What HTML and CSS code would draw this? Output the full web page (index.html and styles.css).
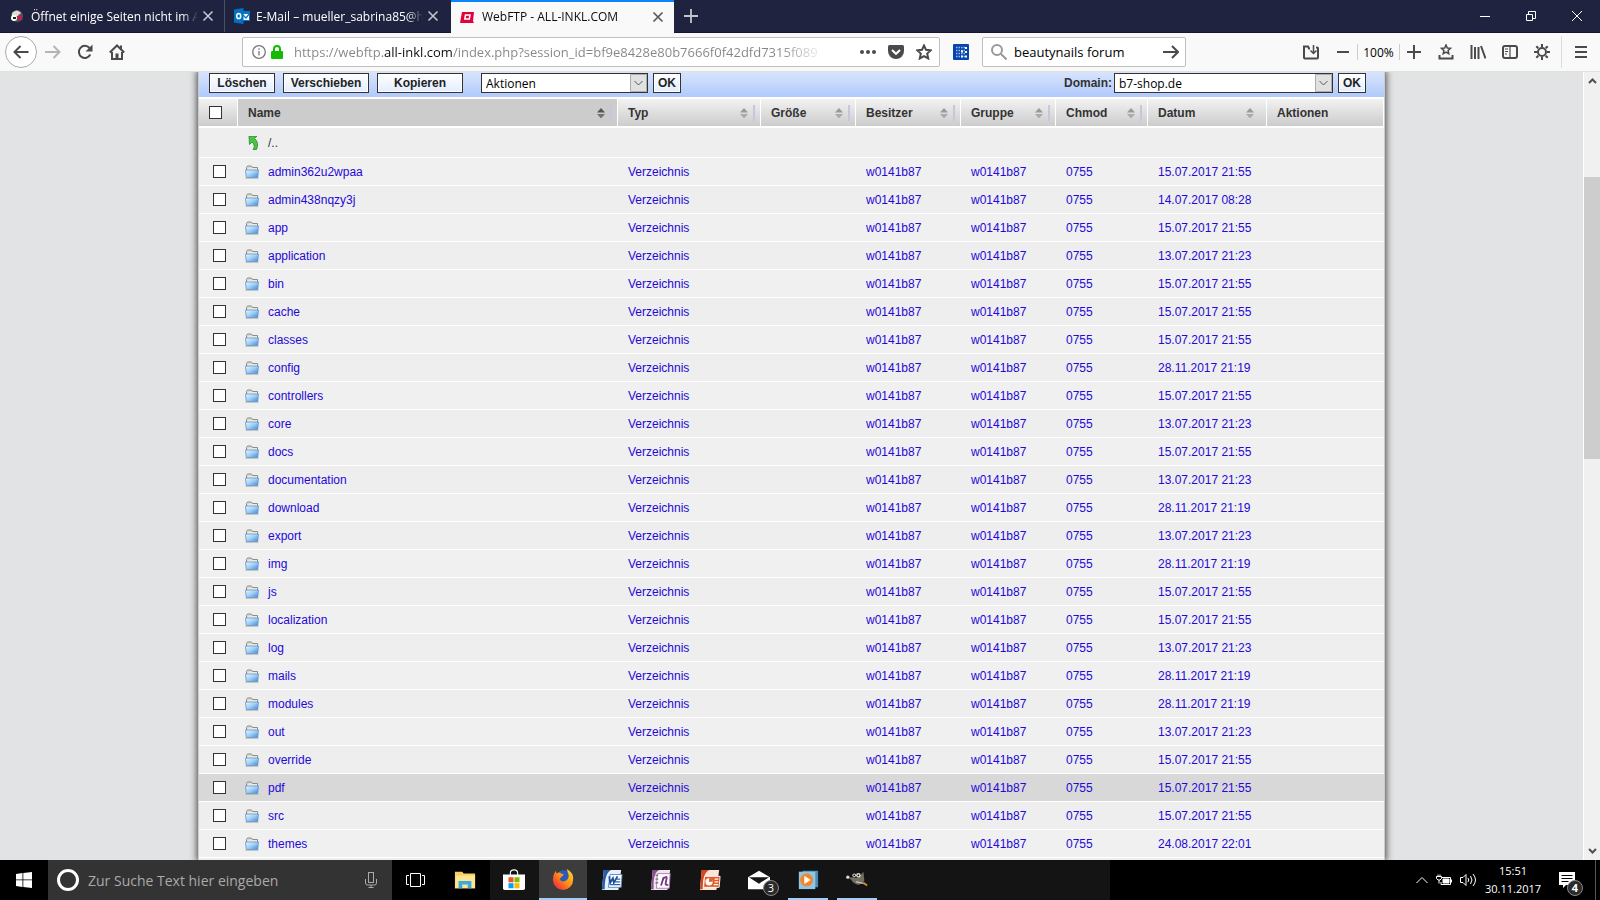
FILE: index.html
```
<!DOCTYPE html>
<html lang="de">
<head>
    <meta charset="UTF-8">
    <meta name="viewport" content="width=device-width, initial-scale=1.0">
    <title>WebFTP - ALL-INKL.COM</title>
    <link rel="stylesheet" href="styles.css">
</head>
<body>
    <!-- Shared icons -->
    <svg class="defs" width="0" height="0">
        <defs>
            <linearGradient id="blue" x1="0" y1="0" x2="1" y2="1">
                <stop offset="0" stop-color="#eef8ff"/>
                <stop offset=".5" stop-color="#9fcdf6"/>
                <stop offset="1" stop-color="#3f86d8"/>
            </linearGradient>
            <linearGradient id="flame" x1="1" y1="0" x2="0" y2="1">
                <stop offset="0" stop-color="#ffe226"/>
                <stop offset=".5" stop-color="#ff8a16"/>
                <stop offset="1" stop-color="#e8104f"/>
            </linearGradient>
            <symbol id="folder" viewBox="0 0 14 14">
                <path d="M1.5 6V2.500l1-1.500h4l1 1.500h5V6z" fill="#dcdcd6" stroke="#8c8c88"/>
                <path d="M3 4h9" stroke="#f6f6f4"/>
                <path d="M.5 5h13l-.8 7.500H1.300z" fill="url(#blue)" stroke="#5a94c8" stroke-width=".8"/>
                <path d="M.5 13.300h13" stroke="#aaa" stroke-width=".8"/>
            </symbol>
            <symbol id="sort" viewBox="0 0 8 10">
                <path class="up" d="M0 4.500L4 0l4 4.500z"/>
                <path class="down" d="M0 6h8l-4 4.500z" fill-opacity=".75"/>
            </symbol>
            <symbol id="close" viewBox="0 0 12 12">
                <path d="M1.500 1.500l9 9M10.500 1.500l-9 9" fill="none" stroke="currentColor" stroke-width="1.6"/>
            </symbol>
        </defs>
    </svg>

    <!-- Tabs -->
    <header class="titlebar">
        <div class="tab">
            <svg class="favicon" viewBox="0 0 16 16"><circle cx="8" cy="8" r="6" fill="#555"/><path d="M3 5q5-5 9 0l-3 3-6 1z" fill="#ddd"/><circle cx="5" cy="10" r="3" fill="#fff"/><path d="M4 10h3" stroke="#222" stroke-width="2"/><path d="M10 6l4 6-6-1z" fill="#e0104c"/></svg>
            <span class="tab-title">Öffnet einige Seiten nicht im Ac</span>
            <button class="tab-close" aria-label="Tab schließen"><svg><use href="#close"/></svg></button>
        </div>
        <div class="tab">
            <svg class="favicon" viewBox="0 0 16 16"><path d="M8 3h8v10H8z" fill="#0a72c8"/><path d="M9 6h6v6H9z" fill="#fff"/><path d="M9 7l3 3 4-5" fill="none" stroke="#0a72c8" stroke-width="1.300"/><path d="M0 1.500L9.500 0v16L0 14.500z" fill="#0072c6"/><ellipse cx="4.700" cy="8" rx="2" ry="2.600" fill="none" stroke="#fff" stroke-width="1.500"/></svg>
            <span class="tab-title">E-Mail – mueller_sabrina85@ho</span>
            <button class="tab-close" aria-label="Tab schließen"><svg><use href="#close"/></svg></button>
        </div>
        <div class="tab active">
            <svg class="favicon" viewBox="0 0 16 16"><path d="M2 3h12l-1 9 1 2H0z" fill="#e2003d"/><path d="M5.500 6H10l-.7 4H4.800z" fill="none" stroke="#fff" stroke-width="1.500"/></svg>
            <span class="tab-title">WebFTP - ALL-INKL.COM</span>
            <button class="tab-close" aria-label="Tab schließen"><svg><use href="#close"/></svg></button>
        </div>
        <button class="new-tab" aria-label="Neuer Tab"><svg viewBox="0 0 14 14"><path d="M7 0v14M0 7h14" stroke="#c4c5cc" stroke-width="1.800"/></svg></button>
        <div class="window-buttons">
            <button aria-label="Minimieren"><svg viewBox="0 0 10 10"><path d="M0 5.500h10"/></svg></button>
            <button aria-label="Verkleinern"><svg viewBox="0 0 10 10"><path d="M.5 3.500h6v6h-6zM2.500 3V.5h7v7H7"/></svg></button>
            <button aria-label="Schließen"><svg viewBox="0 0 10 10"><path d="M0 0l10 10M10 0L0 10"/></svg></button>
        </div>
    </header>

    <!-- Navigation bar -->
    <nav class="navbar">
        <button class="nav-btn back" aria-label="Zurück"><svg viewBox="0 0 16 16"><path d="M15.500 8H1.500M7.500 2L1.500 8l6 6"/></svg></button>
        <button class="nav-btn forward" aria-label="Vor"><svg viewBox="0 0 16 16"><path d="M0 8h14.500M8.500 2l6 6-6 6"/></svg></button>
        <button class="nav-btn" aria-label="Neu laden"><svg viewBox="0 0 16 16"><path d="M13.300 10.500A6 6 0 1 1 12.500 4"/><path class="solid" d="M15.500.5v7h-7z"/></svg></button>
        <button class="nav-btn" aria-label="Startseite"><svg viewBox="0 0 16 16"><path d="M.8 8.500L8 1.500l7.200 7M3 8v7h10V8M12 1.500V5"/><path class="solid" d="M6.500 9.500h3V15h-3z"/></svg></button>
        <div class="urlbar">
            <svg class="info" viewBox="0 0 14 14"><circle cx="7" cy="7" r="6.300"/><path d="M7 6v4.500M7 3.200v1.600"/></svg>
            <svg class="lock" viewBox="0 0 12 14"><path d="M3 7V4a3 3 0 0 1 6 0v3" fill="none" stroke="#12bc00" stroke-width="2"/><rect y="6" width="12" height="8" rx="1" fill="#12bc00"/></svg>
            <input type="text" aria-label="Adresse" value="https://webftp.all-inkl.com/index.php?session_id=bf9e8428e80b7666f0f42dfd7315f089">
            <button class="url-btn" aria-label="Seitenaktionen"><svg viewBox="0 0 16 16"><g class="solid"><circle cx="2" cy="8" r="2"/><circle cx="8" cy="8" r="2"/><circle cx="14" cy="8" r="2"/></g></svg></button>
            <button class="url-btn" aria-label="Pocket"><svg viewBox="0 0 16 16"><path class="solid" d="M1.500 1h13q1.500 0 1.500 1.500V7a8 8 0 0 1-16 0V2.500Q0 1 1.500 1z"/><path d="M4 6l4 3.800L12 6" style="stroke:#fff"/></svg></button>
            <button class="url-btn" aria-label="Lesezeichen"><svg viewBox="0 0 16 16"><path d="M8 1.500l2 4.300 4.700.6-3.500 3.200 1 4.900L8 12.200l-4.200 2.300 1-4.900L1.300 6.400 6 5.800z"/></svg></button>
        </div>
        <button class="nav-btn" aria-label="Erweiterung"><svg viewBox="0 0 16 16"><rect class="ext" width="16" height="16" rx="1"/><path d="M3 3.500h10M3 6.500h10M3 9.500h10M3 12.500h10" style="stroke:#9db9e8;stroke-dasharray:1.500 1;stroke-width:1.500"/><path d="M8 7.500h2M12 4h2M12 8h2M8 12.500h2M12 12.500h2" style="stroke:#fff"/></svg></button>
        <div class="searchbar">
            <svg viewBox="0 0 16 16"><circle cx="6" cy="6" r="5"/><path d="M10 10l5.500 5.500"/></svg>
            <input type="text" aria-label="Suchen" value="beautynails forum">
            <button class="url-btn" aria-label="Suche starten"><svg viewBox="0 0 16 16"><path d="M0 8h15M9 2l6 6-6 6"/></svg></button>
        </div>
        <div class="nav-tools">
            <button class="nav-btn" aria-label="In Pocket speichern"><svg viewBox="0 0 16 16"><path d="M7 4.500H6l-1-2H1v11q0 1 1 1h12q1 0 1-1v-9q0-1-1-1h-1"/><path d="M10.500 1v8M7.500 6.500l3 3 3-3" style="stroke-width:1.500"/></svg></button>
            <button class="nav-btn" aria-label="Verkleinern"><svg viewBox="0 0 16 16"><path d="M2 8h12"/></svg></button>
            <button class="zoom-level">100%</button>
            <button class="nav-btn" aria-label="Vergrößern"><svg viewBox="0 0 16 16"><path d="M1 8h14M8 1v14"/></svg></button>
            <button class="nav-btn" aria-label="Lesezeichen-Menü"><svg viewBox="0 0 16 16"><path d="M8 1l1.300 3 3.200.3-2.400 2.200.7 3.300L8 8.200 5.200 9.800l.7-3.300-2.400-2.200L6.700 4z" style="stroke-width:1.500"/><path d="M1.500 11v3.500h13V11"/></svg></button>
            <button class="nav-btn" aria-label="Bibliothek"><svg viewBox="0 0 16 16"><path d="M1.500 1v14M5 3v12M8.500 3v12M11 2l4.500 12.500"/></svg></button>
            <button class="nav-btn" aria-label="Sidebars"><svg viewBox="0 0 16 16"><rect x="1" y="2" width="14" height="12" rx="2"/><path d="M8 2v12M3 5h3M3 7.500h3M3 10h2" style="stroke-width:1.200"/></svg></button>
            <button class="nav-btn" aria-label="Einstellungen"><svg viewBox="0 0 16 16"><circle cx="8" cy="8" r="4"/><path d="M8 0v3M8 13v3M0 8h3M13 8h3M2.300 2.300l2 2M11.700 11.700l2 2M2.300 13.700l2-2M11.700 4.300l2-2"/></svg></button>
            <span class="separator"></span>
            <button class="nav-btn" aria-label="Menü"><svg viewBox="0 0 16 16"><path d="M2 3h12M2 8h12M2 13h12"/></svg></button>
        </div>
    </nav>

    <!-- Page -->
    <div class="viewport">
        <main class="page">
            <div class="panel">
                <div class="toolbar">
                    <button class="tool-btn small">Löschen</button>
                    <button class="tool-btn">Verschieben</button>
                    <button class="tool-btn">Kopieren</button>
                    <select class="actions" aria-label="Aktionen"><option>Aktionen</option></select>
                    <button class="ok-btn">OK</button>
                    <label for="domain">Domain:</label>
                    <select id="domain"><option>b7-shop.de</option></select>
                    <button class="ok-btn">OK</button>
                </div>
                <table>
                    <colgroup>
                        <col class="c-check"><col><col class="c-type"><col class="c-size"><col class="c-owner"><col class="c-group"><col class="c-chmod"><col class="c-date"><col class="c-actions">
                    </colgroup>
                    <thead>
                        <tr>
                            <th class="check"><input type="checkbox" aria-label="Alle auswählen"></th>
                            <th class="sorted"><div class="head bar">Name<svg><use href="#sort"/></svg></div></th>
                            <th><div class="head bar">Typ<svg><use href="#sort"/></svg></div></th>
                            <th><div class="head bar">Größe<svg><use href="#sort"/></svg></div></th>
                            <th><div class="head bar">Besitzer<svg><use href="#sort"/></svg></div></th>
                            <th><div class="head bar">Gruppe<svg><use href="#sort"/></svg></div></th>
                            <th><div class="head bar">Chmod<svg><use href="#sort"/></svg></div></th>
                            <th><div class="head">Datum<svg><use href="#sort"/></svg></div></th>
                            <th><div class="head">Aktionen</div></th>
                        </tr>
                    </thead>
                    <tbody id="files">
                        <tr class="parent">
                            <td></td>
                            <td colspan="8"><a class="name" href="#"><svg viewBox="0 0 14 14"><path d="M4 0h8L9.500 2.500q5 4 2 11H8q3-4-1-7.500L4.500 8.500z" fill="#4cc24a" stroke="#23892a" stroke-width=".8"/></svg>/..</a></td>
                        </tr>
                    </tbody>
                </table>
            </div>
        </main>
        <div class="scrollbar">
            <svg viewBox="0 0 9 6"><path d="M1 5l3.500-3.500L8 5"/></svg>
            <div class="track"><div class="thumb"></div></div>
            <svg viewBox="0 0 9 6"><path d="M1 1l3.500 3.500L8 1"/></svg>
        </div>
    </div>

    <!-- Taskbar -->
    <footer class="taskbar">
        <button class="start" aria-label="Start"><svg viewBox="0 0 16 16"><path fill="#fff" d="M0 2l6.500-1v6.500H0zM7.300.9L16 0v7.500H7.300zM0 8.300h6.500V15L0 14zM7.300 8.300H16V16l-8.700-1z"/></svg></button>
        <div class="cortana">
            <span class="ring"></span>
            <input type="text" aria-label="Suche" placeholder="Zur Suche Text hier eingeben">
            <svg viewBox="0 0 12 16"><rect x="3.500" y=".5" width="5" height="10"/><path d="M.5 7v4q0 2 2 2h7q2 0 2-2V7M6 13v2.500M3.500 15.500h5"/></svg>
        </div>
        <div class="apps">
            <button aria-label="Taskansicht"><svg viewBox="0 0 22 22"><path d="M5.500 4.500h10v13h-10zM4 6.500H1.500v9H4M17 6.500h2.500v9H17" fill="none" stroke="#fff"/></svg></button>
            <button aria-label="Explorer"><svg viewBox="0 0 24 24"><path d="M1 3h8l1.500 2H23v16H1z" fill="#f8cf63"/><path d="M2 7h21v14H1z" fill="#ffe592"/><path d="M5 21v-8h14v8h-4v-4H9v4z" fill="#3ca9df"/></svg></button>
            <button aria-label="Store"><svg viewBox="0 0 24 24"><path d="M8 8V4.500q0-3.500 4-3.500t4 3.500V8" fill="none" stroke="#fff" stroke-width="1.200"/><path d="M0 6h24v15q0 2-2 2H2q-2 0-2-2z" fill="#fff"/><path d="M6 9h5.500v5.500H6z" fill="#f25022"/><path d="M12.500 9H18v5.500h-5.500z" fill="#7fba00"/><path d="M6 15.500h5.500V21H6z" fill="#00a4ef"/><path d="M12.500 15.500H18V21h-5.500z" fill="#ffb900"/></svg></button>
            <button class="current" aria-label="Firefox"><svg viewBox="0 0 24 24"><circle cx="12.500" cy="11.500" r="9" fill="#2a5bb8"/><path d="M16 1q8 4 7 12a11 11 0 0 1-22 0Q1 7 4 3l1 3q3-2 5 0l3 1-3 3q-2 1-1 3 2 3 6 1 4-3 3-7-1-3-2-6z" fill="url(#flame)"/></svg></button>
            <button aria-label="Word"><svg viewBox="0 0 24 24"><path d="M3 1h19l-3 22H1z" fill="#e6effa"/><path d="M3 1h8q-7 3-7 21H1z" fill="#2a5ca8"/><path d="M10 6h13l-1 14H8z" fill="#fff" stroke="#5c84bd"/><path d="M9 8l1 7 3-5 1 5 4-7" fill="none" stroke="#1e4e9b" stroke-width="2"/><path d="M16 11h5M15 14h6M10 17h11" stroke="#2f62ae" stroke-width="1.500"/></svg></button>
            <button aria-label="OneNote"><svg viewBox="0 0 24 24"><path d="M3 1h19l-3 22H1z" fill="#f1e5f2"/><path d="M3 1h7q-7 3-6 21H1z" fill="#87518f"/><path d="M8 5h14l-1 16H7z" fill="#fff" stroke="#ad79b2"/><path d="M6 7h3M6 11h3M6 15h3" stroke="#777" stroke-width="1.500"/><path d="M12 18l3-9q-1 4-1 2 5-5 4 0l-1 5q0 2 3 1" fill="none" stroke="#783580" stroke-width="2"/></svg></button>
            <button aria-label="PowerPoint"><svg viewBox="0 0 24 24"><path d="M3 1h19l-3 22H1z" fill="#fbe3d7"/><path d="M3 1h8q-7 3-7 21H1z" fill="#d5471e"/><path d="M6 8h17l-1 12H5z" fill="#e05a27" stroke="#fff"/><circle cx="11" cy="14" r="4" fill="#fff"/><path d="M11 14V10a4 4 0 0 1 4 4z" fill="#e05a27"/><path d="M17 11h4M17 14h4M16 17h5" stroke="#fff" stroke-width="1.500"/></svg></button>
            <button aria-label="Mail"><svg viewBox="0 0 24 24"><path d="M0 9l12-7 12 7v13H0z" fill="#fff"/><path d="M1 9h22l-8 5-3 2z" fill="#161616"/></svg><span class="badge">3</span></button>
            <button class="open" aria-label="Media Player"><svg viewBox="0 0 24 24"><path d="M6 3h17v18H6z" fill="#458eb9"/><path d="M2 4h18v19H2z" fill="#8fc6e3"/><circle cx="10.500" cy="13" r="7" fill="#f48426"/><path d="M8 8.500v9l7-4.500z" fill="#fff"/></svg></button>
            <button class="open" aria-label="GIMP"><svg viewBox="0 0 24 24"><path d="M3 11l4-1 6 1 6-7 1 10q-3 5-8 4-5-2-6-5z" fill="#746e61"/><circle cx="9" cy="8" r="2" fill="#ddd"/><circle cx="13.500" cy="8" r="2.500" fill="#ddd"/><circle cx="9" cy="8" r="1"/><circle cx="13.500" cy="8" r="1"/><circle cx="2" cy="10" r="1.800" fill="#ddd"/><path d="M11 15l9 2" stroke="#bbb" stroke-width="1.500"/><path d="M19 16l4 3" stroke="#d58a33" stroke-width="2"/></svg></button>
        </div>
        <div class="tray">
            <svg class="chevron" viewBox="0 0 12 7"><path d="M.5 6.500L6 1l5.500 5.500"/></svg>
            <svg class="battery" viewBox="0 0 16 12"><path d="M6 3.500h8.500v7H5V8M15.500 5.500v3M.5 2.500h5v2l-1.500 1.500H2L.5 4.500zM2 .5v2M4 .5v2M3 6v3.500"/><path d="M7 5h6v4H7z" fill="#fff"/></svg>
            <svg class="volume" viewBox="0 0 16 14"><path d="M.5 4.500h2.500l3-3v11l-3-3H.500zM8 5q1.500 2 0 4M10.500 3q3 4 0 8M13 1q5 6 0 12"/></svg>
            <div class="clock"><time>15:51</time><time>30.11.2017</time></div>
            <button class="notes" aria-label="Info-Center"><svg viewBox="0 0 16 16"><path d="M0 0h16v13H7l-3 3v-3H0z" fill="#fff"/><path d="M2.500 3.500h11M2.500 6.500h11M2.500 9.500h7" stroke="#000"/></svg><span class="badge">4</span></button>
            <span class="show-desktop"></span>
        </div>
    </footer>

    <script>
        const files = [
            ["admin362u2wpaa", "15.07.2017 21:55"],
            ["admin438nqzy3j", "14.07.2017 08:28"],
            ["app", "15.07.2017 21:55"],
            ["application", "13.07.2017 21:23"],
            ["bin", "15.07.2017 21:55"],
            ["cache", "15.07.2017 21:55"],
            ["classes", "15.07.2017 21:55"],
            ["config", "28.11.2017 21:19"],
            ["controllers", "15.07.2017 21:55"],
            ["core", "13.07.2017 21:23"],
            ["docs", "15.07.2017 21:55"],
            ["documentation", "13.07.2017 21:23"],
            ["download", "28.11.2017 21:19"],
            ["export", "13.07.2017 21:23"],
            ["img", "28.11.2017 21:19"],
            ["js", "15.07.2017 21:55"],
            ["localization", "15.07.2017 21:55"],
            ["log", "13.07.2017 21:23"],
            ["mails", "28.11.2017 21:19"],
            ["modules", "28.11.2017 21:19"],
            ["out", "13.07.2017 21:23"],
            ["override", "15.07.2017 21:55"],
            ["pdf", "15.07.2017 21:55"],
            ["src", "15.07.2017 21:55"],
            ["themes", "24.08.2017 22:01"]
        ];
        const selected = "pdf";

        document.getElementById("files").insertAdjacentHTML("beforeend", files.map(([name, date]) => `
            <tr${name === selected ? ' class="hover"' : ""}>
                <td class="check"><input type="checkbox" aria-label="${name}"></td>
                <td><a class="name" href="#"><svg><use href="#folder"/></svg>${name}</a></td>
                <td><a href="#">Verzeichnis</a></td>
                <td></td>
                <td><a href="#">w0141b87</a></td>
                <td><a href="#">w0141b87</a></td>
                <td><a href="#">0755</a></td>
                <td><a href="#">${date}</a></td>
                <td></td>
            </tr>`).join(""));
    </script>
</body>
</html>
```
FILE: styles.css
```
/* General */
* {
    box-sizing: border-box;
}
body {
    display: flex;
    flex-direction: column;
    height: 100vh;
    margin: 0;
    overflow: hidden;
    font-family: "Open Sans", sans-serif;
    font-size: 12px;
}
button, input, select {
    font-family: inherit;
    font-size: inherit;
    margin: 0;
}
button {
    display: flex;
    align-items: center;
    justify-content: center;
    padding: 0;
    border: 0;
    background: none;
}
.defs {
    position: absolute;
}

/* Tabs */
.titlebar {
    display: flex;
    flex: none;
    height: 33px;
    background: #202340;
    border-bottom: 1px solid #15172c;
    color: #fff;
}
.tab {
    display: flex;
    align-items: center;
    width: 225px;
    padding: 0 10px 0 9px;
    border-right: 1px solid #4d4f66;
}
.tab:nth-child(2) {
    width: 226px;
    padding-right: 12px;
    border-right: 0;
}
.tab.active {
    width: 223px;
    height: 33px;
    padding-bottom: 2px;
    background: #f9f9f9;
    border-top: 2px solid #0a84ff;
    border-right: 0;
    color: #0c0c0d;
}
.favicon {
    flex: none;
    width: 16px;
    height: 16px;
    margin-right: 6px;
}
.tab-title {
    flex: 1;
    min-width: 0;
    white-space: nowrap;
    -webkit-mask-image: linear-gradient(to left, transparent, #000 16px);
    mask-image: linear-gradient(to left, transparent, #000 16px);
}
.tab-close {
    margin-left: 4px;
    color: #c4c5cc;
}
.active .tab-close {
    color: #555;
}
.tab-close svg {
    width: 12px;
    height: 12px;
}
.new-tab {
    width: 34px;
}
.new-tab svg {
    width: 14px;
    height: 14px;
}
.window-buttons {
    display: flex;
    margin-left: auto;
}
.window-buttons button {
    width: 46px;
}
.window-buttons svg {
    width: 10px;
    height: 10px;
    fill: none;
    stroke: #fff;
    overflow: visible;
}

/* Navigation bar */
.navbar {
    display: flex;
    flex: none;
    align-items: center;
    height: 39px;
    padding: 0 3px 0 5px;
    background: #f9f9f9;
    border-bottom: 1px solid #e0e0de;
}
.navbar svg {
    width: 16px;
    height: 16px;
    fill: none;
    stroke: #4a4a4a;
    stroke-width: 2;
}
.navbar .solid {
    fill: #4a4a4a;
    stroke: none;
}
.navbar .ext {
    fill: #0645ad;
    stroke: none;
}
.nav-btn {
    flex: none;
    width: 32px;
    height: 32px;
}
.back {
    border: 1px solid #aaa;
    border-radius: 50%;
    background: #fff;
}
.navbar .forward svg {
    stroke: #b5b5b5;
}
.urlbar, .searchbar {
    display: flex;
    align-items: center;
    height: 30px;
    background: #fff;
    border: 1px solid #c0c0c0;
    border-radius: 2px;
}
.urlbar {
    flex: 1;
    margin: 0 5px 0 109px;
    padding: 0 1px 0 9px;
}
.navbar .info {
    width: 14px;
    height: 14px;
    stroke: #777;
    stroke-width: 1.3;
}
.navbar .lock {
    width: 12px;
    height: 14px;
    margin: 0 11px 0 5px;
    stroke: none;
}
.urlbar input, .searchbar input {
    flex: 1;
    min-width: 0;
    padding: 0;
    border: 0;
    outline: 0;
    background: none;
    font-size: 13px;
}
/* host name in black, the rest grey, fading out on the right */
.urlbar input {
    height: 28px;
    background: linear-gradient(to right, #858585 90px, #0c0c0d 90px, #0c0c0d 159px, #858585 159px, #858585 485px, #f0f0f0 526px);
    -webkit-background-clip: text;
    background-clip: text;
    -webkit-text-fill-color: transparent;
}
.url-btn {
    flex: none;
    width: 28px;
    height: 28px;
}
.searchbar {
    width: 204px;
    margin: 0 0 0 5px;
    padding-left: 8px;
}
.navbar .searchbar > svg {
    flex: none;
    margin-right: 7px;
    stroke: #999;
}
.nav-tools {
    display: flex;
    align-items: center;
    margin-left: 109px;
}
.zoom-level {
    width: 43px;
    height: 16px;
    margin: 0 -2px;
    border: solid #ccc;
    border-width: 0 1px;
}
.separator {
    width: 1px;
    height: 32px;
    margin: 0 3px;
    background: #ddd;
}

/* Page */
.viewport {
    display: flex;
    flex: 1;
    min-height: 0;
}
.page {
    flex: 1;
    overflow: hidden;
    background: #e2e3e5;
}
.panel {
    max-width: 1185px;
    min-height: 100%;
    margin: 0 auto;
    background: #eee;
    box-shadow: 0 0 0 1px #ccc, 0 0 7px 2px #444;
    font-family: "Liberation Sans", sans-serif;
    color: #333;
}
.toolbar {
    display: flex;
    align-items: center;
    height: 27px;
    padding: 1px 18px 4px 10px;
    background: linear-gradient(#d8e4fd, #b0cafc);
    border-bottom: 2px solid #fff;
    font-weight: bold;
}
.tool-btn, .ok-btn {
    height: 20px;
    border: 1px solid #333;
    background: linear-gradient(#fff, #e3edff);
    box-shadow: inset 0 0 0 1px #fff;
    color: #222;
    font-weight: bold;
}
.tool-btn {
    width: 86px;
    margin-right: 8px;
}
.tool-btn.small {
    width: 66px;
}
.ok-btn {
    width: 28px;
    margin-left: 5px;
}
.toolbar select {
    appearance: none;
    width: 219px;
    height: 20px;
    padding: 0 20px 0 4px;
    border: 1px solid #333;
    border-radius: 0;
    background: #fff url("data:image/svg+xml,%3Csvg xmlns='http://www.w3.org/2000/svg' width='17' height='18'%3E%3Cpath d='M.5.5h16v17H.5z' fill='%23e1e1e1' stroke='%23adadad'/%3E%3Cpath d='M4.500 7l4 4 4-4' fill='none' stroke='%23555'/%3E%3C/svg%3E") no-repeat right center;
    color: #000;
    font-family: "Open Sans", sans-serif;
}
.toolbar .actions {
    width: 167px;
    margin-left: 10px;
}
.toolbar label {
    margin: 0 2px 0 auto;
}

/* File list */
table {
    width: 100%;
    table-layout: fixed;
    border-collapse: separate;
    border-spacing: 0;
}
.c-check { width: 39px; }
.c-type { width: 143px; }
.c-size, .c-group { width: 95px; }
.c-owner { width: 105px; }
.c-chmod { width: 92px; }
.c-date { width: 119px; }
.c-actions { width: 117px; }
th {
    height: 29px;
    padding: 0;
    background: linear-gradient(#f2f2f2, #ccc);
    border-right: 1px solid #fff;
    border-bottom: 2px solid #fff;
    text-align: left;
}
th.sorted {
    background: #ccc;
}
.head {
    display: flex;
    align-items: center;
    height: 16px;
    margin-right: 5px;
    padding: 0 7px 0 10px;
}
.head.bar {
    padding-right: 5px;
    border-right: 2px solid #c3c9da;
}
.head svg {
    width: 8px;
    height: 10px;
    margin-left: auto;
    fill: #999;
}
.sorted .head svg {
    fill: #555;
}
td {
    height: 28px;
    padding: 0 0 0 10px;
    background: #eee;
    border-bottom: 1px solid #fff;
    white-space: nowrap;
}
tr:nth-child(even) td {
    background: #f0f0f0;
}
tr.parent td {
    height: 30px;
}
tr.hover td {
    background: #d8d8d8;
}
td.check {
    padding-left: 14px;
}
th.check {
    padding-left: 10px;
}
.check input {
    appearance: none;
    display: block;
    width: 13px;
    height: 13px;
    background: #fff;
    border: 1px solid #333;
}
td a {
    color: #2408d8;
    text-decoration: none;
}
.name {
    display: flex;
    align-items: center;
    margin-left: -3px;
}
.name svg {
    width: 14px;
    height: 14px;
    margin-right: 9px;
}
.parent .name {
    color: #333;
}

/* Scrollbar */
.scrollbar {
    display: flex;
    flex-direction: column;
    align-items: center;
    width: 17px;
    padding: 6px 0;
    background: #f0f0f0;
    border-left: 1px solid #fff;
}
.scrollbar svg {
    width: 9px;
    height: 6px;
    fill: none;
    stroke: #505050;
    stroke-width: 2;
}
.track {
    flex: 1;
    align-self: stretch;
    padding-top: 93px;
}
.thumb {
    height: 42%;
    background: #cdcdcd;
}

/* Taskbar */
.taskbar {
    display: flex;
    flex: none;
    height: 40px;
    background: linear-gradient(to right, #000 490px, #141414 490px, #141414 1110px, #000 1110px);
    color: #fff;
}
.start {
    width: 48px;
}
.start svg {
    width: 16px;
    height: 16px;
}
.cortana {
    display: flex;
    align-items: center;
    width: 344px;
    padding: 0 15px 0 9px;
    background: #333;
}
.ring {
    width: 22px;
    height: 22px;
    border: 3px solid #fff;
    border-radius: 50%;
}
.cortana input {
    flex: 1;
    margin-left: 9px;
    padding: 0;
    border: 0;
    background: none;
    font-size: 14px;
}
.cortana input::placeholder {
    color: #aaa;
}
.cortana svg {
    width: 12px;
    height: 16px;
    fill: none;
    stroke: #aaa;
}
.apps {
    display: flex;
    gap: 1px;
}
.apps button {
    position: relative;
    width: 48px;
}
.apps svg {
    width: 22px;
    height: 22px;
}
.apps .current {
    background: #3c3c3c;
    border-bottom: 2px solid #a2cdf4;
}
.apps .open {
    width: 40px;
    margin: 0 4px;
    border-bottom: 2px solid #a2cdf4;
}
.badge {
    position: absolute;
    left: 28px;
    bottom: 4px;
    width: 16px;
    height: 16px;
    border: 1px solid #888;
    border-radius: 50%;
    background: #2b2b2b;
    color: #fff;
    font-size: 11px;
    line-height: 14px;
    text-align: center;
}
.tray {
    display: flex;
    align-items: center;
    margin-left: auto;
}
.tray > svg {
    height: 14px;
    margin-right: 8px;
    fill: none;
    stroke: #fff;
}
.chevron {
    width: 12px;
}
.battery, .volume {
    width: 16px;
}
.clock {
    display: flex;
    flex-direction: column;
    align-items: center;
    width: 58px;
    margin: 0 17px 0 0;
    font-size: 11px;
    line-height: 18px;
}
.notes {
    position: relative;
    width: 16px;
    height: 40px;
    margin-right: 20px;
}
.notes svg {
    width: 16px;
    height: 16px;
}
.notes .badge {
    left: 8px;
    font-weight: bold;
}
.show-desktop {
    width: 5px;
    height: 40px;
    border-left: 1px solid #555;
}
```
